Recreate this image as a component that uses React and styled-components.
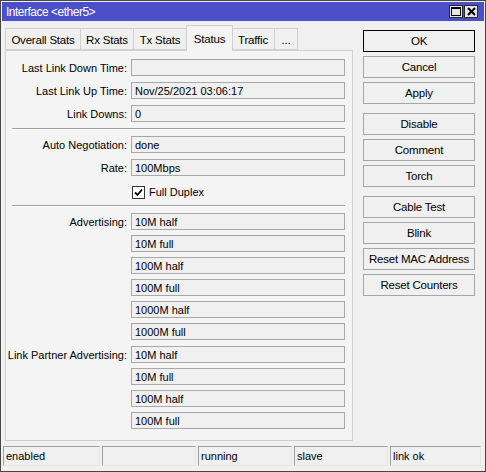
import React from 'react'
import styled, { createGlobalStyle } from 'styled-components'

const GlobalStyle = createGlobalStyle`
    html, body { margin: 0; padding: 0; background: #f0f0f0; }
    * { box-sizing: border-box; }
`

const Window = styled.div`
    width: 486px;
    height: 472px;
    border: 1px solid #464646;
    background: #f0f0f0;
    display: flex;
    flex-direction: column;
    font-family: "Liberation Sans", Arial, sans-serif;
    font-size: 11px;
    color: #000;
`

const TitleBar = styled.div`
    margin: 1px 1px 0;
    height: 19px;
    background: #4b4fc8;
    color: #fff;
    display: flex;
    align-items: center;
    padding: 0 6px 0 4px;
    font-size: 12px;
    letter-spacing: -0.5px;
`

const TitleButtons = styled.div`
    margin-left: auto;
    display: flex;
    gap: 1px;
`

const TitleButton = styled.div`
    width: 14px;
    height: 13px;
    background: #e4e4e4;
    border: 1px solid #2a2a2a;
    display: flex;
    align-items: center;
    justify-content: center;
`

const Main = styled.div`
    display: flex;
    padding: 4px 0 0 4px;
`

const LeftCol = styled.div`
    width: 348px;
    display: flex;
    flex-direction: column;
`

const TabRow = styled.div`
    height: 25px;
    display: flex;
    align-items: flex-end;
`

const Tab = styled.div`
    width: ${p => p.w}px;
    height: ${p => (p.active ? 26 : 22)}px;
    margin-bottom: ${p => (p.active ? -1 : 0)}px;
    margin-left: ${p => (p.active ? -1 : 0)}px;
    margin-right: ${p => (p.active ? -1 : 0)}px;
    position: relative;
    z-index: ${p => (p.active ? 1 : 0)};
    border: 1px solid #d0d0d0;
    border-bottom: ${p => (p.active ? 'none' : '1px solid #d0d0d0')};
    border-left: ${p => (p.first || p.active ? '1px solid #d0d0d0' : 'none')};
    background: ${p => (p.active ? '#f4f4f4' : '#f0f0f0')};
    display: flex;
    align-items: center;
    justify-content: center;
    padding-top: ${p => (p.active ? 0 : 2)}px;
    font-size: 11.5px;
    letter-spacing: -0.2px;
`

const Panel = styled.div`
    height: 391px;
    border: 1px solid #d0d0d0;
    background: #f4f4f4;
    padding: 8px 7px 0 0;
    display: flex;
    flex-direction: column;
`

const Section = styled.div`
    display: flex;
    flex-direction: column;
    gap: ${p => p.gap || 6}px;
`

const Row = styled.div`
    display: grid;
    grid-template-columns: 121px 1fr;
    column-gap: 4px;
    align-items: center;
`

const Label = styled.div`
    text-align: right;
    white-space: nowrap;
    padding-top: 1px;
`

const Field = styled.div`
    grid-column: 2;
    height: 17px;
    border: 1px solid #a8a8a8;
    background: #f0f0f0;
    padding: 1px 0 0 3px;
    line-height: 14px;
    white-space: nowrap;
`

const Separator = styled.div`
    margin: 6px 0 6px 6px;
    height: 2px;
    border-top: 1px solid #a0a0a0;
    border-bottom: 1px solid #ffffff;
`

const Spacer = styled.div`
    height: ${p => p.h}px;
`

const CheckRow = styled.div`
    grid-column: 2;
    height: 17px;
    display: flex;
    align-items: center;
    gap: 4px;
    padding-left: 1px;
    padding-top: 3px;
`

const CheckBox = styled.div`
    width: 13px;
    height: 13px;
    border: 1px solid #333;
    background: #fff;
    display: flex;
    align-items: center;
    justify-content: center;
`

const Buttons = styled.div`
    width: 112px;
    margin: 5px 0 0 10px;
    display: flex;
    flex-direction: column;
    gap: 9px;
`

const ButtonGroup = styled.div`
    display: flex;
    flex-direction: column;
    gap: 4px;
`

const Button = styled.div`
    height: 22px;
    border: 1px solid ${p => (p.primary ? '#000' : '#a6a6a6')};
    background: #f0f0f0;
    display: flex;
    align-items: center;
    justify-content: center;
    font-size: 11.5px;
    letter-spacing: -0.2px;
`

const StatusBar = styled.div`
    margin-top: 5px;
    padding-left: 2px;
    display: grid;
    grid-template-columns: 97px 94px 94px 94px 91px;
    gap: 2px;
`

const StatusCell = styled.div`
    height: 20px;
    border: 1px solid #a0a0a0;
    border-right-color: #e6e6e6;
    border-bottom-color: #e6e6e6;
    padding: 3px 0 0 2px;
`

const tabs = [
    { label: 'Overall Stats', w: 76 },
    { label: 'Rx Stats', w: 53 },
    { label: 'Tx Stats', w: 53 },
    { label: 'Status', w: 47, active: true },
    { label: 'Traffic', w: 43 },
    { label: '...', w: 23 },
]

const advertising = ['10M half', '10M full', '100M half', '100M full', '1000M half', '1000M full']
const partner = ['10M half', '10M full', '100M half', '100M full']

const buttonGroups = [
    ['OK', 'Cancel', 'Apply'],
    ['Disable', 'Comment', 'Torch'],
    ['Cable Test', 'Blink', 'Reset MAC Address', 'Reset Counters'],
]

const status = ['enabled', '', 'running', 'slave', 'link ok']

const FieldList = ({ label, items }) => (
    <Section gap={5}>
        {items.map((item, i) => (
            <Row key={item + i}>
                {i === 0 && <Label>{label}</Label>}
                <Field>{item}</Field>
            </Row>
        ))}
    </Section>
)

const App = () => {
    return (
        <Window>
            <GlobalStyle />
            <TitleBar>
                <span>Interface &lt;ether5&gt;</span>
                <TitleButtons>
                    <TitleButton>
                        <svg width="10" height="9" viewBox="0 0 10 9">
                            <rect x="0.5" y="0.5" width="9" height="8" fill="none" stroke="#000" />
                            <line x1="0" y1="1.5" x2="10" y2="1.5" stroke="#000" />
                        </svg>
                    </TitleButton>
                    <TitleButton>
                        <svg width="9" height="9" viewBox="0 0 9 9">
                            <path d="M1 1 L8 8 M8 1 L1 8" stroke="#000" strokeWidth="2" />
                        </svg>
                    </TitleButton>
                </TitleButtons>
            </TitleBar>

            <Main>
                <LeftCol>
                    <TabRow>
                        {tabs.map((t, i) => (
                            <Tab key={t.label} w={t.w} active={t.active} first={i === 0}>{t.label}</Tab>
                        ))}
                    </TabRow>
                    <Panel>
                        <Section>
                            <Row><Label>Last Link Down Time:</Label><Field /></Row>
                            <Row><Label>Last Link Up Time:</Label><Field>Nov/25/2021 03:06:17</Field></Row>
                            <Row><Label>Link Downs:</Label><Field>0</Field></Row>
                        </Section>
                        <Separator />
                        <Section>
                            <Row><Label>Auto Negotiation:</Label><Field>done</Field></Row>
                            <Row><Label>Rate:</Label><Field>100Mbps</Field></Row>
                            <Row>
                                <CheckRow>
                                    <CheckBox>
                                        <svg width="9" height="9" viewBox="0 0 9 9">
                                            <path d="M1 4.5 L3.5 7 L8 1.5" fill="none" stroke="#000" strokeWidth="1.8" />
                                        </svg>
                                    </CheckBox>
                                    <span>Full Duplex</span>
                                </CheckRow>
                            </Row>
                        </Section>
                        <Separator />
                        <FieldList label="Advertising:" items={advertising} />
                        <Spacer h={6} />
                        <FieldList label="Link Partner Advertising:" items={partner} />
                    </Panel>
                </LeftCol>

                <Buttons>
                    {buttonGroups.map((group, g) => (
                        <ButtonGroup key={g}>
                            {group.map(b => <Button key={b} primary={b === 'OK'}>{b}</Button>)}
                        </ButtonGroup>
                    ))}
                </Buttons>
            </Main>

            <StatusBar>
                {status.map((s, i) => <StatusCell key={i}>{s}</StatusCell>)}
            </StatusBar>
        </Window>
    )
}

export default App
